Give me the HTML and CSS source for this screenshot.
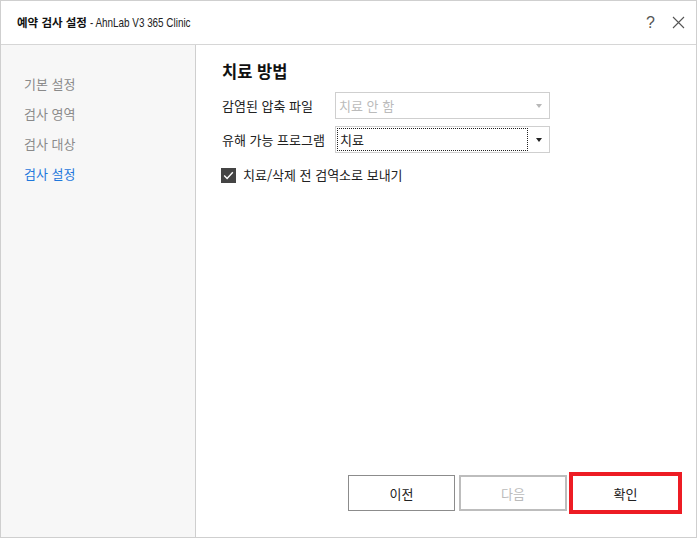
FILE: index.html
```html
<!DOCTYPE html>
<html lang="ko">
<head>
    <meta charset="UTF-8">
    <meta name="viewport" content="width=device-width, initial-scale=1.0">
    <title>예약 검사 설정</title>
    <link rel="stylesheet" href="styles.css">
</head>
<body>
    <div class="window">
        <div class="titlebar">
            <div class="title"><b>예약 검사 설정</b> <span class="app">- AhnLab V3 365 Clinic</span></div>
            <div class="title-btns">
                <span class="help">?</span>
                <svg class="close" width="13" height="13" viewBox="0 0 13 13">
                    <path d="M1 1 L12 12 M12 1 L1 12" stroke="#555" stroke-width="1.1" fill="none"/>
                </svg>
            </div>
        </div>
        <div class="main">
            <ul class="sidebar">
                <li>기본 설정</li>
                <li>검사 영역</li>
                <li>검사 대상</li>
                <li class="active">검사 설정</li>
            </ul>
            <div class="content">
                <h2>치료 방법</h2>
                <div class="row">
                    <span class="label">감염된 압축 파일</span>
                    <div class="select disabled">
                        <span class="value">치료 안 함</span>
                        <span class="arrow"></span>
                    </div>
                </div>
                <div class="row">
                    <span class="label">유해 가능 프로그램</span>
                    <div class="select">
                        <span class="value focus">치료</span>
                        <span class="arrow"></span>
                    </div>
                </div>
                <div class="check-row">
                    <span class="checkbox">
                        <svg width="15" height="15" viewBox="0 0 15 15">
                            <path d="M3.2 7.6 L6.1 10.5 L11.8 4.3" stroke="#fff" stroke-width="1.4" fill="none"/>
                        </svg>
                    </span>
                    <span>치료/삭제 전 검역소로 보내기</span>
                </div>
                <div class="footer">
                    <button class="btn">이전</button>
                    <button class="btn btn-disabled">다음</button>
                    <button class="btn btn-ok">확인</button>
                </div>
            </div>
        </div>
    </div>
</body>
</html>
```

FILE: styles.css
```css
body {
    margin: 0;
    background: #fff;
    font-family: "Noto Sans CJK KR", "Noto Sans", sans-serif;
    font-size: 13px;
    color: #222;
}
.window {
    width: 697px;
    height: 538px;
    border: 1px solid #cfcfcf;
    box-sizing: border-box;
    display: flex;
    flex-direction: column;
}
.titlebar {
    height: 43px;
    flex-shrink: 0;
    border-bottom: 1px solid #d6d6d6;
    display: flex;
    align-items: center;
    justify-content: space-between;
    padding: 0 11px 0 16px;
}
.title {
    font-size: 12px;
    line-height: 20px;
    color: #222;
    white-space: nowrap;
}
.title b {
    font-size: 11.5px;
    font-weight: bold;
    color: #111;
}
.title .app {
    display: inline-block;
    font-family: "Liberation Sans", sans-serif;
    font-size: 13px;
    transform: scaleX(0.76);
    transform-origin: left center;
}
.title-btns {
    display: flex;
    align-items: center;
    gap: 17px;
}
.help {
    font-family: "Liberation Sans", sans-serif;
    font-size: 16px;
    color: #555;
    line-height: 20px;
}
.close {
    display: block;
}
.main {
    flex: 1;
    display: flex;
}
.sidebar {
    width: 194px;
    margin: 0;
    padding: 24px 0 0 0;
    list-style: none;
    background: #f7f7f7;
    border-right: 1px solid #cfcfcf;
}
.sidebar li {
    height: 30px;
    line-height: 30px;
    padding-left: 23px;
    color: #8a8a8a;
}
.sidebar li.active {
    color: #1f78dc;
}
.content {
    flex: 1;
    display: flex;
    flex-direction: column;
    padding: 14px 14px 23px 26px;
}
h2 {
    margin: 0 0 9px 0;
    font-size: 16.5px;
    font-weight: bold;
    line-height: 24px;
    color: #111;
}
.row {
    display: flex;
    align-items: center;
    margin-bottom: 7px;
}
.label {
    width: 113px;
    line-height: 20px;
}
.select {
    width: 215px;
    height: 27px;
    box-sizing: border-box;
    border: 1px solid #cfcfcf;
    display: flex;
    align-items: center;
    padding: 0 7px 0 1px;
    background: #fff;
}
.value {
    flex: 1;
    height: 23px;
    line-height: 23px;
    padding-left: 2px;
    box-sizing: border-box;
}
.value.focus {
    border: 1px dotted #222;
    line-height: 21px;
    margin-right: 8px;
}
.disabled .value {
    color: #bbb;
}
.arrow {
    width: 0;
    height: 0;
    border-left: 3.5px solid transparent;
    border-right: 3.5px solid transparent;
    border-top: 4px solid #222;
}
.disabled .arrow {
    border-top-color: #b8b8b8;
}
.check-row {
    display: flex;
    align-items: center;
    gap: 7px;
    margin-top: 5px;
    line-height: 20px;
}
.checkbox {
    width: 15px;
    height: 15px;
    background: #444;
    display: flex;
    margin-left: -1px;
}
.footer {
    margin-top: auto;
    display: flex;
    justify-content: flex-end;
    align-items: center;
}
.btn {
    font-family: "Noto Sans CJK KR", "Noto Sans", sans-serif;
    font-size: 13px;
    width: 107px;
    height: 36px;
    background: #fff;
    border: 1px solid #8c8c8c;
    color: #222;
    padding: 0;
}
.btn-disabled {
    width: 108px;
    margin-left: 4px;
    border: 2px solid #bdbdbd;
    color: #bbb;
}
.btn-ok {
    width: 113px;
    height: 42px;
    border: 4px solid #ed1c24;
    margin-left: 2px;
}
```
